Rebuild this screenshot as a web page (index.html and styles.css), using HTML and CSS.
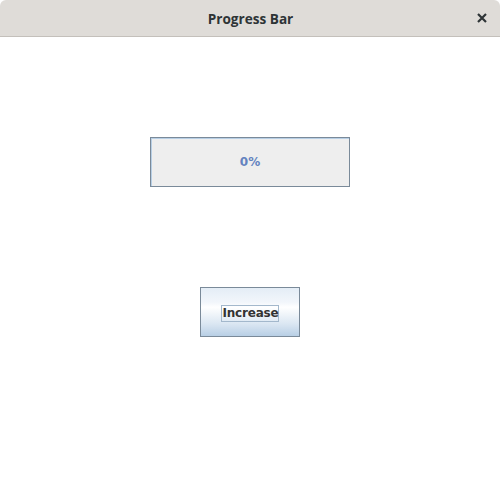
FILE: index.html
```html
<!DOCTYPE html>
<html>
<head>
<meta charset="utf-8">
<link rel="stylesheet" href="styles.css">
</head>
<body>
<div class="window">
  <div class="titlebar">
    <span class="title">Progress Bar</span>
    <span class="close">
      <svg width="10" height="10" viewBox="0 0 10 10"><path d="M1 1 L9 9 M9 1 L1 9" stroke="#2e3436" stroke-width="2.2"/></svg>
    </span>
  </div>
  <div class="content">
    <div class="progress"><span class="ptext">0%</span></div>
    <button class="btn"><span class="focus">Increase</span></button>
  </div>
</div>
</body>
</html>
```
FILE: styles.css
```css
html, body { margin: 0; padding: 0; background: #ffffff; }
.window { width: 500px; height: 500px; display: flex; flex-direction: column; }
.titlebar {
  height: 36px;
  background: #dfdcd8;
  border-bottom: 1px solid #c4c0bb;
  border-radius: 6px 6px 0 0;
  display: flex; align-items: center; justify-content: center;
  position: relative;
  flex: none;
}
.title {
  font-family: "Open Sans", "Noto Sans", sans-serif;
  font-weight: bold;
  font-size: 13.6px;
  color: #2e3436;
  padding-left: 1px;
}
.close { position: absolute; right: 13px; top: 13px; width: 10px; height: 10px; display: flex; }
.content {
  flex: 1;
  display: flex; flex-direction: column; align-items: center;
  padding-top: 100px; gap: 100px;
}
.progress {
  width: 198px; height: 48px;
  background: #eeeeee;
  border: 1px solid #7a8a99;
  box-shadow: inset 1px 1px 0 #b8cfe5;
  display: flex; align-items: center; justify-content: center;
}
.ptext {
  font-family: "DejaVu Sans", sans-serif;
  font-weight: bold; font-size: 12px;
  color: #6382bf;
}
.btn {
  width: 100px; height: 50px; margin: 0; padding: 2px 0 0 0;
  border: 1px solid #7a8a99;
  background: linear-gradient(to bottom, #e4edf6 0%, #f2f6fb 30%, #ffffff 40%, #dae6f2 75%, #b8cfe5 100%);
  display: flex; align-items: center; justify-content: center;
}
.focus {
  font-family: "DejaVu Sans", sans-serif;
  font-weight: bold; font-size: 12px;
  color: #333333;
  border: 1px solid #a3b8cc;
  padding: 0 0 0 1px;
  line-height: 15px;
  letter-spacing: -0.2px;
}
```
